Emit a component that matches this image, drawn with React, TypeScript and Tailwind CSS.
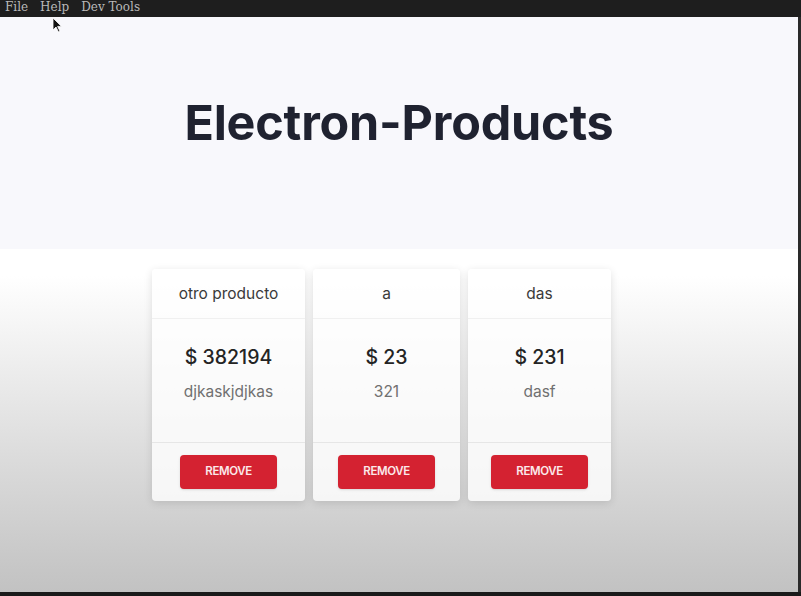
import React from 'react';

type Product = {
  name: string;
  price: number;
  description: string;
};

const products: Product[] = [
  { name: 'otro producto', price: 382194, description: 'djkaskjdjkas' },
  { name: 'a', price: 23, description: '321' },
  { name: 'das', price: 231, description: 'dasf' },
];

const widths = ['w-[153px]', 'w-[147px]', 'w-[143px]'];

const ProductCard: React.FC<Product & { width: string }> = ({ name, price, description, width }) => (
  <div className={`${width} flex flex-col bg-white/80 rounded shadow-[0_2px_8px_rgba(0,0,0,0.12)]`}>
    <div className="h-[50px] flex items-center justify-center border-b border-[#f0f0f0] text-[15.5px] text-[#3a3a3a]">
      {name}
    </div>
    <div className="h-[124px] flex flex-col items-center pt-[24px] border-b border-[#e6e6e6]">
      <h3 className="text-[19.5px] font-medium text-[#242424]">$ {price}</h3>
      <p className="mt-[8px] text-[15.5px] text-[#707070]">{description}</p>
    </div>
    <div className="h-[58px] flex items-center justify-center">
      <button className="w-[97px] h-[34px] rounded bg-[#d42231] text-[#fbe9ea] text-[11.5px] font-semibold uppercase tracking-[-0.4px] shadow-sm">
        Remove
      </button>
    </div>
  </div>
);

const App: React.FC = () => {
  return (
    <div className="relative w-[801px] h-[596px] overflow-hidden flex flex-col bg-[#c3c3c3] font-['Inter',sans-serif]">
      <div className="h-[17px] shrink-0 bg-[#1e1e1e] flex items-start gap-[12px] pl-[5px] font-['DejaVu_Serif',serif] text-[12px] leading-[14px] text-[#b9b9b9]">
        <span>File</span>
        <span>Help</span>
        <span>Dev Tools</span>
      </div>
      <div className="flex-1 flex flex-col border-r-[3px] border-[#2a2a2a] bg-gradient-to-b from-white from-[45%] to-[#c2c2c2]">
        <div className="h-[232px] shrink-0 bg-[#f8f8fc] flex justify-center pt-[82px]">
          <h1 className="text-[48.5px] leading-none font-bold text-[#1f2230] tracking-[-0.2px]">Electron-Products</h1>
        </div>
        <div className="flex gap-[8px] pl-[152px] pt-[20px]">
          {products.map((p, i) => (
            <ProductCard key={p.name} {...p} width={widths[i]} />
          ))}
        </div>
      </div>
      <div className="h-[4px] shrink-0 bg-[#1a1a1a]" />
      <svg className="absolute left-[52px] top-[17px]" width="11" height="16" viewBox="0 0 11 16">
        <path d="M1 1 L1 13 L4 10 L6.5 15 L8 14.3 L5.6 9.4 L9.5 9.4 Z" fill="#111" stroke="#fff" strokeWidth="0.8" />
      </svg>
    </div>
  );
};

export default App;
